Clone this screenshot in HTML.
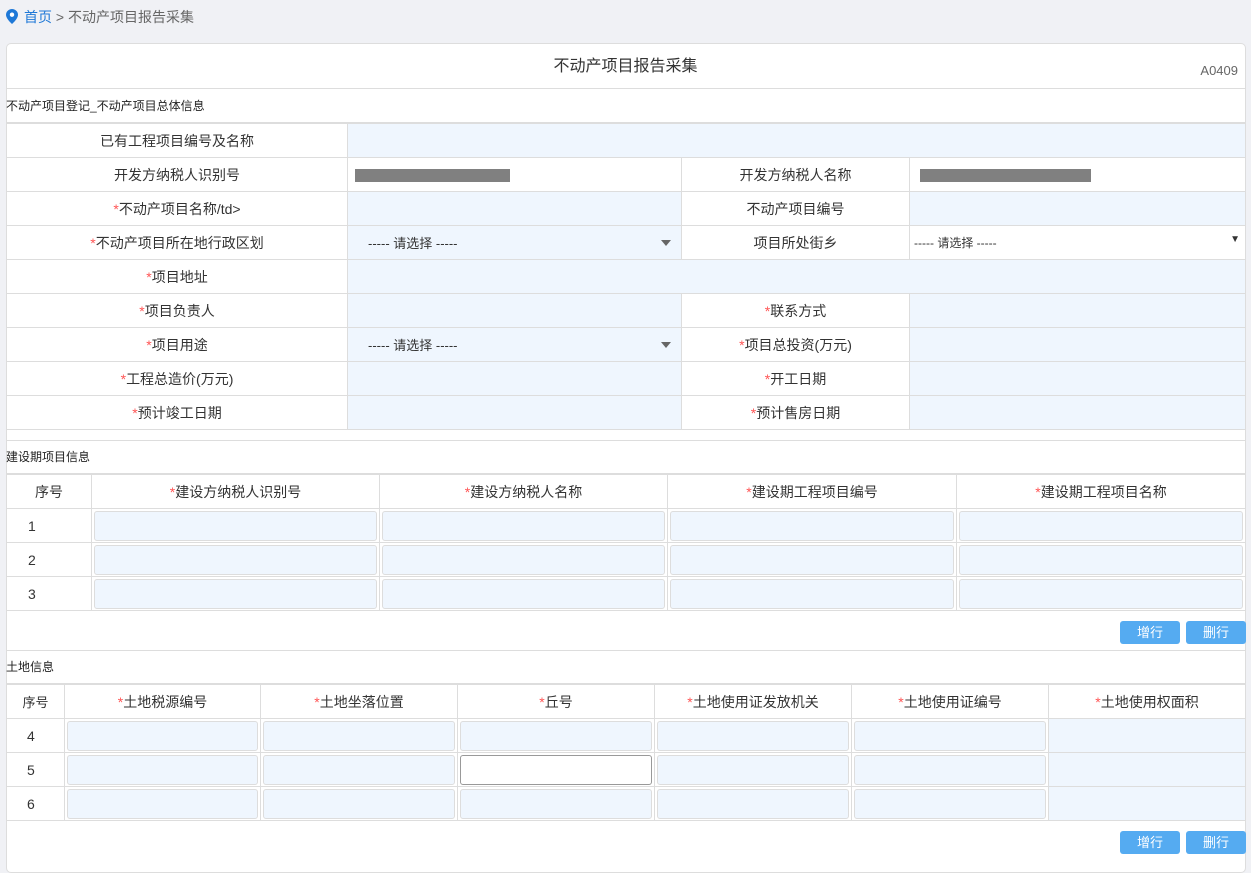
<!DOCTYPE html>
<html><head><meta charset="utf-8"><style>
*{box-sizing:border-box;margin:0;padding:0}
body{width:1251px;height:859px;background:#f0f1f5;font-family:"Liberation Sans","Noto Sans CJK SC",sans-serif;color:#333;position:relative;overflow:hidden}
.crumb{position:absolute;left:6px;top:7px;font-size:14px;color:#666}
.crumb b{font-weight:normal;color:#1e78d7}
.card{position:absolute;left:6px;top:43px;width:1240px;height:830px;background:#fff;border:1px solid #ddd;border-radius:5px}
.abs{position:absolute}
.title{left:6px;top:43px;width:1239px;height:46px;text-align:center;line-height:48px;font-size:16px;border-bottom:1px solid #ddd}
.code{right:13px;top:63px;font-size:13px;color:#666}
.sec{left:6px;width:1239px;height:34px;line-height:34px;font-size:12px;padding-left:0;border-bottom:1px solid #ddd;color:#222}
table{position:absolute;left:6px;width:1239px;border-collapse:collapse;table-layout:fixed;font-size:14px}
td{height:34px;border:1px solid #ddd;text-align:center;padding:0}
td.v{background:#eff6fe}
td.w{background:#fff}
.s{color:#f55}
.in{display:block;margin:0 2px;height:30px;background:#eff6fe;border:1px solid #ddd;border-radius:3px}
.sel{text-align:left;padding-left:20px;position:relative;font-size:13px}
.sel i{position:absolute;right:10px;top:14px;border:5px solid transparent;border-top:6px solid #666}
.gray{display:inline-block;height:13px;background:#808080;vertical-align:middle}
.btn{position:absolute;width:60px;height:23px;background:#55abf1;color:#fff;border-radius:3px;font-size:13px;text-align:center;line-height:23px}
.n{text-align:left;padding-left:21px}
</style></head><body>
<div class="crumb"><svg width="12" height="15" viewBox="0 0 12 15" style="vertical-align:-2px;margin-right:6px"><path d="M6 0C2.7 0 0 2.6 0 5.8 0 10 6 15 6 15s6-5 6-9.2C12 2.6 9.3 0 6 0z" fill="#1e78d7"/><circle cx="6" cy="5.7" r="2.2" fill="#fff"/></svg><b>首页</b> &gt; 不动产项目报告采集</div>
<div class="card"></div>
<div class="abs title">不动产项目报告采集</div>
<div class="abs code">A0409</div>
<div class="abs sec" style="top:89px">不动产项目登记_不动产项目总体信息</div>
<table style="top:123px">
<colgroup><col style="width:341px"><col style="width:334px"><col style="width:228px"><col style="width:336px"></colgroup>
<tr><td>已有工程项目编号及名称</td><td class="v" colspan="3"></td></tr>
<tr><td>开发方纳税人识别号</td><td class="w" style="text-align:left;padding-left:7px"><span class="gray" style="width:155px"></span></td><td>开发方纳税人名称</td><td class="w" style="text-align:left;padding-left:10px"><span class="gray" style="width:171px"></span></td></tr>
<tr><td><span class="s">*</span>不动产项目名称/td&gt;</td><td class="v"></td><td>不动产项目编号</td><td class="v"></td></tr>
<tr><td><span class="s">*</span>不动产项目所在地行政区划</td><td class="v sel">----- 请选择 -----<i></i></td><td>项目所处街乡</td><td class="w" style="text-align:left;padding-left:4px;font-size:12px;position:relative">----- 请选择 -----<span style="position:absolute;right:5px;font-size:10px">▼</span></td></tr>
<tr><td><span class="s">*</span>项目地址</td><td class="v" colspan="3"></td></tr>
<tr><td><span class="s">*</span>项目负责人</td><td class="v"></td><td><span class="s">*</span>联系方式</td><td class="v"></td></tr>
<tr><td><span class="s">*</span>项目用途</td><td class="v sel">----- 请选择 -----<i></i></td><td><span class="s">*</span>项目总投资(万元)</td><td class="v"></td></tr>
<tr><td><span class="s">*</span>工程总造价(万元)</td><td class="v"></td><td><span class="s">*</span>开工日期</td><td class="v"></td></tr>
<tr><td><span class="s">*</span>预计竣工日期</td><td class="v"></td><td><span class="s">*</span>预计售房日期</td><td class="v"></td></tr>
</table>
<div class="abs" style="left:6px;top:440px;width:1239px;border-top:1px solid #ddd"></div>
<div class="abs sec" style="top:440px">建设期项目信息</div>
<table style="top:474px">
<colgroup><col style="width:85px"><col style="width:288px"><col style="width:288px"><col style="width:289px"><col style="width:289px"></colgroup>
<tr><td>序号</td><td><span class="s">*</span>建设方纳税人识别号</td><td><span class="s">*</span>建设方纳税人名称</td><td><span class="s">*</span>建设期工程项目编号</td><td><span class="s">*</span>建设期工程项目名称</td></tr>
<tr><td class="n">1</td><td><span class="in"></span></td><td><span class="in"></span></td><td><span class="in"></span></td><td><span class="in"></span></td></tr>
<tr><td class="n">2</td><td><span class="in"></span></td><td><span class="in"></span></td><td><span class="in"></span></td><td><span class="in"></span></td></tr>
<tr><td class="n">3</td><td><span class="in"></span></td><td><span class="in"></span></td><td><span class="in"></span></td><td><span class="in"></span></td></tr>
</table>
<div class="btn" style="left:1120px;top:621px">增行</div>
<div class="btn" style="left:1186px;top:621px">删行</div>
<div class="abs" style="left:6px;top:650px;width:1239px;border-top:1px solid #ddd"></div>
<div class="abs sec" style="top:650px">土地信息</div>
<table style="top:684px">
<colgroup><col style="width:58px"><col style="width:196px"><col style="width:197px"><col style="width:197px"><col style="width:197px"><col style="width:197px"><col style="width:197px"></colgroup>
<tr><td style="font-size:13px">序号</td><td><span class="s">*</span>土地税源编号</td><td><span class="s">*</span>土地坐落位置</td><td><span class="s">*</span>丘号</td><td><span class="s">*</span>土地使用证发放机关</td><td><span class="s">*</span>土地使用证编号</td><td><span class="s">*</span>土地使用权面积</td></tr>
<tr><td class="n" style="padding-left:20px">4</td><td><span class="in"></span></td><td><span class="in"></span></td><td><span class="in"></span></td><td><span class="in"></span></td><td><span class="in"></span></td><td class="v"></td></tr>
<tr><td class="n" style="padding-left:20px">5</td><td><span class="in"></span></td><td><span class="in"></span></td><td><span class="in" style="background:#fff;border-color:#999"></span></td><td><span class="in"></span></td><td><span class="in"></span></td><td class="v"></td></tr>
<tr><td class="n" style="padding-left:20px">6</td><td><span class="in"></span></td><td><span class="in"></span></td><td><span class="in"></span></td><td><span class="in"></span></td><td><span class="in"></span></td><td class="v"></td></tr>
</table>
<div class="btn" style="left:1120px;top:831px">增行</div>
<div class="btn" style="left:1186px;top:831px">删行</div>
</body></html>
